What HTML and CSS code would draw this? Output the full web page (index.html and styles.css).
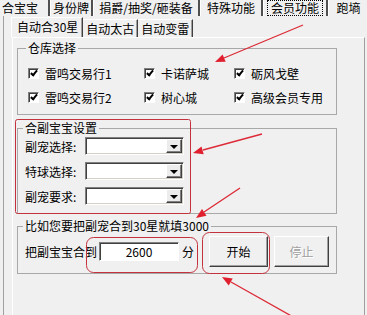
FILE: index.html
```html
<!DOCTYPE html>
<html lang="zh-CN">
<head>
    <meta charset="UTF-8">
    <title>会员功能</title>
    <link rel="stylesheet" href="styles.css">
</head>
<body>
    <!-- top level tabs -->
    <div class="tabbar">
        <span class="tab first">合宝宝</span>
        <span class="tab t2">身份牌</span>
        <span class="tab t3">捐爵/抽奖/砸装备</span>
        <span class="tab t4">特殊功能</span>
        <span class="tab t5 active"><span class="focus">会员功能</span></span>
        <span class="tab t6">跑墒</span>
    </div>

    <div class="outer">
        <div class="subtabs">
            <span class="subtab active">自动合30星</span>
            <span class="subtab">自动太古</span>
            <span class="subtab">自动变雷</span>
        </div>

        <div class="page">
            <fieldset class="group store">
                <legend>仓库选择</legend>
                <div class="checks">
                    <label class="check"><span class="box"></span>雷鸣交易行1</label>
                    <label class="check"><span class="box"></span>卡诺萨城</label>
                    <label class="check"><span class="box"></span>砺风戈壁</label>
                    <label class="check"><span class="box"></span>雷鸣交易行2</label>
                    <label class="check"><span class="box"></span>树心城</label>
                    <label class="check"><span class="box"></span>高级会员专用</label>
                </div>
            </fieldset>

            <fieldset class="group pet">
                <legend>合副宝宝设置</legend>
                <div class="field">
                    <span class="label">副宠选择:</span>
                    <span class="combo"><span class="drop"></span></span>
                </div>
                <div class="field">
                    <span class="label">特球选择:</span>
                    <span class="combo"><span class="drop"></span></span>
                </div>
                <div class="field">
                    <span class="label">副宠要求:</span>
                    <span class="combo"><span class="drop"></span></span>
                </div>
            </fieldset>

            <fieldset class="group target">
                <legend>比如您要把副宠合到30星就填3000</legend>
                <div class="run-row">
                    <span class="label">把副宝宝合到</span>
                    <span class="edit">2600</span>
                    <span class="unit">分</span>
                    <button class="btn start">开始</button>
                    <button class="btn stop" disabled>停止</button>
                </div>
            </fieldset>
        </div>
    </div>

    <!-- red annotation marks drawn over the window -->
    <svg class="marks" width="367" height="315" viewBox="0 0 367 315">
        <g fill="none" stroke="#c4323e" stroke-width="1">
            <rect x="15.5" y="119.5" width="175" height="94" rx="2"/>
            <rect x="86.5" y="237.5" width="111" height="35" rx="7"/>
            <rect x="202.5" y="232.5" width="67" height="41" rx="7"/>
        </g>
        <g stroke="#dc2a36" stroke-width="1.3">
            <line x1="303" y1="25" x2="224" y2="58"/>
            <line x1="262" y1="134" x2="203" y2="150"/>
            <line x1="240" y1="188" x2="204" y2="212"/>
            <line x1="295" y1="318" x2="231" y2="282"/>
        </g>
        <g fill="#e0202e">
            <polygon points="215,62 225.7,61.8 222.6,54.4"/>
            <polygon points="193,153 203.7,154.2 201.5,146.5"/>
            <polygon points="196,218 206.5,215.7 202,209.1"/>
            <polygon points="222,277 228.7,285.4 232.7,278.4"/>
        </g>
    </svg>
</body>
</html>
```

FILE: styles.css
```css
body {
    margin: 0;
    width: 367px;
    height: 315px;
    overflow: hidden;
    position: relative;
    background-color: #f0f0f0;
    color: #000;
    font-family: "Noto Sans CJK SC", "DejaVu Sans", sans-serif;
    font-size: 12px;
}

/* top tab strip */
.tabbar {
    display: flex;
    height: 16px;
}

.tab {
    flex: none;
    box-sizing: border-box;
    height: 16px;
    font-size: 12px;
    line-height: 16px;
    text-align: center;
    border-left: 1px solid #ffffff;
    border-right: 2px solid #505050;
    white-space: nowrap;
}

.tab.first {
    width: 50px;
    text-align: left;
    border-left: none;
    padding-left: 2px;
}

.t2 { width: 43px; }
.t3 { width: 107px; }
.t4 { width: 63px; }
.t5 { width: 65px; }
.t6 { width: 40px; border-right: none; }

.tab .focus {
    display: inline-block;
    line-height: 14px;
    outline: 1px dotted #000;
    padding: 0 3px;
}

.outer {
    margin-left: 3px;
    border-left: 1px solid #a0a0a0;
    height: 299px;
}

/* second level tabs */
.subtabs {
    display: flex;
    align-items: flex-end;
    height: 21px;
    padding-left: 7px;
}

.subtab {
    height: 17px;
    line-height: 17px;
    padding: 0 3px;
    border-top: 1px solid #ffffff;
    border-right: 1px solid #404040;
    box-shadow: inset -1px 0 #a0a0a0;
}

.subtab.active {
    height: 19px;
    padding: 0 4px 0 5px;
    border-left: 1px solid #ffffff;
}

.page {
    margin-left: 8px;
    width: 353px;
    height: 280px;
    border-top: 1px solid #ffffff;
    border-left: 1px solid #ffffff;
    border-right: 1px solid #a0a0a0;
    padding-left: 4px;
    box-sizing: border-box;
}

/* group boxes */
.group {
    width: 320px;
    box-sizing: border-box;
    margin: 0;
    border: 1px solid #a8a8a8;
    padding: 0 0 0 7px;
    min-width: 0;
}

.group legend {
    margin-left: -2px;
    padding: 0 2px;
    line-height: 14px;
    font-size: 12px;
}

.store {
    margin-top: 3px;
    padding: 6px 0 5px 10px;
}

.checks {
    display: grid;
    grid-template-columns: 116px 90px 1fr;
    grid-auto-rows: 24px;
}

.check {
    display: flex;
    align-items: center;
    gap: 6px;
}

.box {
    position: relative;
    width: 9px;
    height: 9px;
    border: 1px solid;
    border-color: #808080 #ffffff #ffffff #808080;
    box-shadow: inset 1px 1px #404040;
    background: #ffffff;
}

.box::after {
    content: "";
    position: absolute;
    left: 3px;
    top: 0px;
    width: 2px;
    height: 5px;
    border-right: 2px solid #000;
    border-bottom: 2px solid #000;
    transform: rotate(40deg);
}

.pet {
    margin-top: 6px;
    padding: 2px 0 8px 7px;
    display: flex;
    flex-direction: column;
    gap: 7px;
}

.field {
    display: flex;
    align-items: center;
    height: 18px;
}

.field .label {
    width: 60px;
}

.combo {
    display: flex;
    justify-content: flex-end;
    align-items: stretch;
    width: 99px;
    height: 18px;
    box-sizing: border-box;
    border: 1px solid;
    border-color: #808080 #ffffff #ffffff #808080;
    box-shadow: inset 1px 1px #404040, inset -1px -1px #d4d0c8;
    background: #ffffff;
    padding: 1px;
}

.drop {
    width: 16px;
    box-sizing: border-box;
    border: 1px solid;
    border-color: #ffffff #404040 #404040 #ffffff;
    box-shadow: inset -1px -1px #808080;
    background: #ececec;
    display: flex;
    align-items: center;
    justify-content: center;
}

.drop::after {
    content: "";
    border-left: 4px solid transparent;
    border-right: 4px solid transparent;
    border-top: 4px solid #000;
    margin-top: 1px;
}

.target {
    margin-top: 5px;
    padding: 3px 0 6px 7px;
}

.run-row {
    display: flex;
    align-items: center;
    height: 31px;
}

.run-row .label {
    width: 74px;
}

.edit {
    width: 80px;
    height: 19px;
    line-height: 17px;
    box-sizing: border-box;
    text-align: center;
    border: 1px solid;
    border-color: #808080 #ffffff #ffffff #808080;
    box-shadow: inset 1px 1px #404040;
    background: #ffffff;
}

.unit {
    margin-left: 3px;
}

.btn {
    font-family: inherit;
    font-size: 12px;
    height: 31px;
    padding: 0;
    margin: 0;
    background: #f0f0f0;
    border: 1px solid;
    border-color: #ffffff #404040 #404040 #ffffff;
    box-shadow: inset -1px -1px #a0a0a0;
    color: #000;
}

.start {
    width: 59px;
    margin-left: 15px;
}

.stop {
    width: 55px;
    margin-left: 6px;
    color: #a0a0a0;
    text-shadow: 1px 1px #ffffff;
}

.marks {
    position: absolute;
    left: 0;
    top: 0;
    pointer-events: none;
}
```
